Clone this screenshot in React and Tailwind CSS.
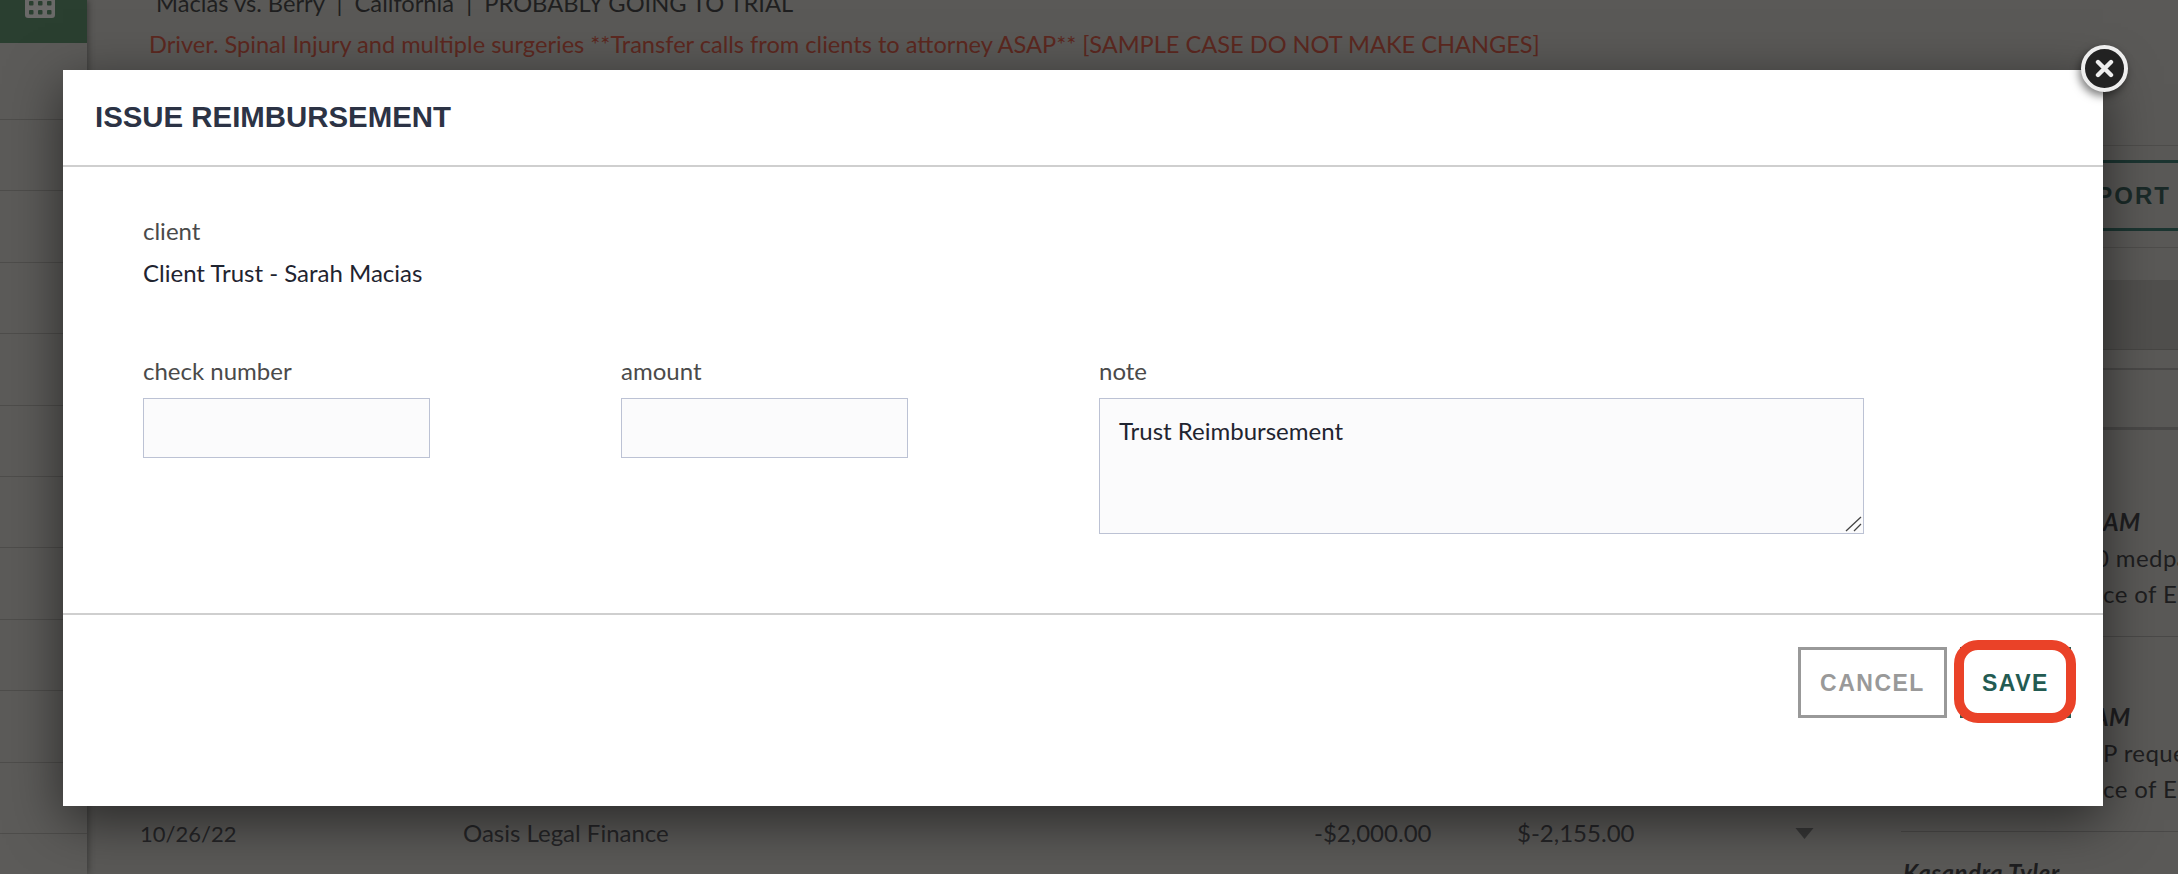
const Field = ({ label, className, children }) => (
  <div className={className}>
    <label className="block text-[24px] leading-[30px] text-[#4a4a4a] mb-[12px]">{label}</label>
    {children}
  </div>
);

const inputClass = "block w-full h-[60px] border border-[#bcc2d4] bg-[#fbfbfc] outline-none";

const Sidebar = () => (
  <div className="w-[87px] h-full shrink-0 bg-[#5c5b59] shadow-[2px_0_6px_rgba(0,0,0,0.3)] z-10">
    <div className="h-[43px] bg-[#2a3f30] pl-[25px]">
      <svg width="30" height="18" viewBox="0 0 30 18">
        <path d="M0 0H30V15a3 3 0 0 1-3 3H3a3 3 0 0 1-3-3Z" fill="#6a6968" />
        {[4, 13, 22].map((x) =>
          [1, 10].map((y) => <rect key={x + "-" + y} x={x} y={y} width="4.5" height="4.5" rx="1" fill="#2a3f30" />)
        )}
      </svg>
    </div>
    <div className="h-[77px] border-b border-[#4e4d4b]" />
    {[...Array(10)].map((_, i) => (
      <div key={i} className="h-[71.4px] border-b border-[#4e4d4b]" />
    ))}
  </div>
);

const Entry = ({ title, titleClass, lines, pad }) => (
  <div className={`${pad} pb-[24px] pl-[202px] border-b border-[#4a4948] text-[24px] leading-[36px] text-[#1e1e20] whitespace-nowrap tracking-[0.4px]`}>
    <div className={`font-bold italic ${titleClass}`}>{title}</div>
    {lines.map((l) => (
      <div key={l.text} className={l.className}>{l.text}</div>
    ))}
  </div>
);

const Background = () => (
  <div className="flex h-full">
    <Sidebar />
    <div className="flex-1 min-w-0 flex flex-col">
      <div className="h-[145px] shrink-0 pl-[62px]">
        <div className="mt-[-12px] pl-[7px] text-[23.7px] leading-[30px] text-[#1f1f20] whitespace-nowrap">
          Macias vs. Berry&nbsp; |&nbsp; California&nbsp; |&nbsp; PROBABLY GOING TO TRIAL
        </div>
        <div className="mt-[11px] text-[23.6px] leading-[30px] text-[#5c2820] whitespace-nowrap">
          Driver. Spinal Injury and multiple surgeries **Transfer calls from clients to attorney ASAP** [SAMPLE CASE DO NOT MAKE CHANGES]
        </div>
      </div>
      <div className="flex-1 min-h-0 flex">
        <div className="flex-1 flex flex-col justify-end pl-[53px] pb-[26px]">
          <div className="flex items-center h-[30px] text-[24px] text-[#252527] whitespace-nowrap">
            <div className="w-[323px] text-[22px]">10/26/22</div>
            <div className="w-[851px]">Oasis Legal Finance</div>
            <div className="w-[203px]">-$2,000.00</div>
            <div className="w-[278px]">$-2,155.00</div>
            <svg width="19" height="11" viewBox="0 0 19 11">
              <path d="M0.5 0H18.5L9.5 11Z" fill="#373737" />
            </svg>
          </div>
        </div>
        <div className="w-[277px] shrink-0 overflow-hidden">
          <div className="h-[103px] border-t border-[#4e4d4b] border-b pt-[14px]">
            <div className="h-[71px] border-y-[3px] border-[#1c3531] flex items-center justify-end pr-[7px] text-[24px] font-bold tracking-[2px] text-[#1a2a28] font-['Liberation_Sans',sans-serif]">
              PORT
            </div>
          </div>
          <div className="h-[32px]" />
          <div className="h-[70px] bg-[#504f4d] border-b border-[#474644]" />
          <div className="h-[20px] border-b-2 border-[#4a4948]" />
          <div className="h-[60px] border-b-[3px] border-[#4a4948]" />
          <Entry
            title="AM"
            lines={[{ text: "0 medpa", className: "ml-[-8px]" }, { text: "ce of El" }]}
            pad="pt-[74px]"
          />
          <Entry
            title="AM"
            titleClass="ml-[-10px]"
            lines={[{ text: "P reque" }, { text: "ce of El" }]}
            pad="pt-[62px]"
          />
          <div className="pt-[23px] pl-[2px] text-[24px] leading-[36px] tracking-[0.5px] font-bold italic text-[#1e1e20] whitespace-nowrap">Kasandra Tyler</div>
        </div>
      </div>
    </div>
  </div>
);

const Modal = () => (
  <div className="absolute left-[63px] top-[70px] w-[2040px] h-[736px] bg-white flex flex-col shadow-[0_14px_50px_rgba(0,0,0,0.55)] z-20">
    <div className="h-[97px] shrink-0 border-b-2 border-[#cfcfcf] pl-[32px] flex items-center">
      <h2 className="text-[29.4px] font-bold text-[#2c3345] font-['Liberation_Sans',sans-serif]">ISSUE REIMBURSEMENT</h2>
    </div>
    <div className="h-[448px] shrink-0 border-b-2 border-[#cfcfcf] pl-[80px] pt-[49px]">
      <div className="text-[24px] leading-[30px] text-[#4a4a4a]">client</div>
      <div className="mt-[12px] text-[24px] leading-[30px] text-[#1f2430]">Client Trust - Sarah Macias</div>
      <div className="mt-[68px] flex gap-[191px] items-start">
        <Field label="check number" className="w-[287px]">
          <input className={inputClass} />
        </Field>
        <Field label="amount" className="w-[287px]">
          <input className={inputClass} />
        </Field>
        <Field label="note" className="w-[765px]">
          <div className="relative">
            <textarea
              readOnly
              defaultValue="Trust Reimbursement"
              className="block w-full h-[136px] border border-[#bcc2d4] bg-[#fbfbfc] outline-none px-[19px] py-[17px] text-[24px] leading-[30px] text-[#1f2430] resize-none"
            />
            <svg className="absolute right-[2px] bottom-[2px]" width="17" height="16" viewBox="0 0 17 16">
              <path d="M1 15L16 1M9 15L16 8" stroke="#444444" strokeWidth="1.3" fill="none" />
            </svg>
          </div>
        </Field>
      </div>
    </div>
    <div className="flex-1 flex justify-end items-start gap-[13px] pt-[32px] pr-[32px] font-['Liberation_Sans',sans-serif] font-bold text-[23px] tracking-[1.5px]">
      <button className="w-[149px] h-[71px] pt-[2px] border-[3px] border-[#999999] text-[#999999]">CANCEL</button>
      <div className="relative h-[71px]">
        <button className="w-[111px] h-[71px] pt-[2px] border-[3px] border-[#235b52] text-[#235b52]">SAVE</button>
        <div className="absolute left-[-6px] right-[-5px] top-[-7px] bottom-[-5px] border-[10px] border-[#ea4228] rounded-[24px]" />
      </div>
    </div>
    <button className="absolute left-[2018px] top-[-25px] w-[47px] h-[47px] rounded-full bg-[#222222] border-[4px] border-[#eeeeee] shadow-[-2px_4px_8px_rgba(0,0,0,0.5)] flex items-center justify-center">
      <svg width="19" height="19" viewBox="0 0 19 19">
        <path d="M3 3L16 16M16 3L3 16" stroke="#eeeeee" strokeWidth="4.4" strokeLinecap="round" />
      </svg>
    </button>
  </div>
);

export default function App() {
  return (
    <div className="relative h-screen w-full overflow-hidden bg-[#5a5957] font-['Lato',sans-serif]">
      <Background />
      <Modal />
    </div>
  );
}
